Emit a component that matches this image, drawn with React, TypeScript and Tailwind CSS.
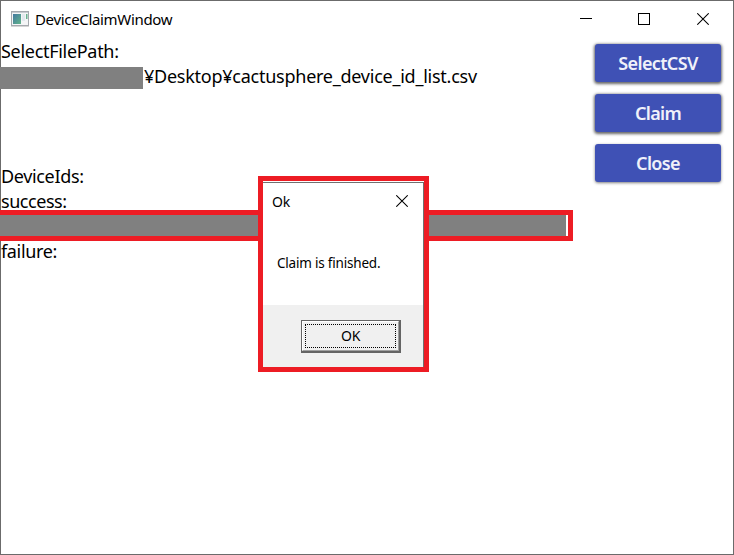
import React from "react";

const ACTIONS = [
  { label: "SelectCSV", style: "tracking-[-0.65px] shadow-[0_1px_3px_1px_rgba(0,0,0,0.6)]" },
  { label: "Claim", style: "tracking-[-0.65px] shadow-[0_1px_3px_1px_rgba(0,0,0,0.6)]" },
  { label: "Close", style: "tracking-[-0.65px] shadow-[0_1px_3px_0px_rgba(0,0,0,0.5)]" },
];

function AppIcon() {
  return (
    <svg width="20" height="16" viewBox="0 0 20 16" className="shrink-0">
      <defs>
        <linearGradient id="pane" x1="0" y1="0" x2="1" y2="1">
          <stop offset="0" stopColor="#4378a0" />
          <stop offset="1" stopColor="#62b58a" />
        </linearGradient>
      </defs>
      <rect x="1.5" y="0.5" width="17" height="14" fill="#f4f5f6" stroke="#a5a9ae" />
      <path d="M2 1.5h16" stroke="#c8ccd2" />
      <rect x="3" y="3" width="8" height="10" fill="url(#pane)" />
      <rect x="12" y="3" width="3" height="7" fill="#e2e9ee" />
      <rect x="16" y="3" width="1.5" height="5" fill="#69b18f" />
      <path d="M1 15.5h18" stroke="#d5d5d5" />
    </svg>
  );
}

function CloseGlyph({ size }: { size: number }) {
  return (
    <svg width={size} height={size} viewBox="0 0 12 12" fill="none" stroke="#000" strokeWidth="1.05">
      <path d="M0.3 0.3L11.7 11.7M11.7 0.3L0.3 11.7" />
    </svg>
  );
}

function TitleBar() {
  return (
    <header className="flex h-[38px] items-center justify-between pb-[2px] pl-[9px] pr-6">
      <div className="flex items-center gap-[5px]">
        <AppIcon />
        <span className="text-[15px] leading-5 tracking-[-0.33px]">DeviceClaimWindow</span>
      </div>
      <div className="flex items-center">
        <svg className="mr-[46px]" width="12" height="12" viewBox="0 0 12 12"><path d="M0 5.5h12" stroke="#000" /></svg>
        <svg className="mr-[47px]" width="12" height="12" viewBox="0 0 12 12"><rect x="0.5" y="0.5" width="11" height="11" fill="none" stroke="#000" /></svg>
        <CloseGlyph size={12} />
      </div>
    </header>
  );
}

function MessageDialog() {
  return (
    <div className="absolute left-[258px] top-[176px] h-[196px] w-[171px] border-[5px] border-[#ed1c24] bg-white pt-px">
      <div className="flex h-full flex-col border-r border-t border-[#707070]">
        <div className="flex h-9 items-center justify-between pl-[9px] pr-[15px]">
          <span className="mt-px text-[14px] leading-5 tracking-[-0.3px]">Ok</span>
          <CloseGlyph size={12} />
        </div>
        <div className="flex grow items-center pl-[14px] pt-[2px]">
          <span className="text-[13.5px] leading-5 tracking-[-0.2px]">Claim is finished.</span>
        </div>
        <div className="flex h-[62px] justify-end bg-[#f0f0f0] pr-[22px] pt-[15px]">
          <button className="h-[33px] w-[100px] border border-[#646464] bg-[#f0f0f0]">
            <div className="h-full border-b border-r border-[#646464]">
              <div className="h-full border-b border-l border-r border-t border-b-[#a0a0a0] border-l-white border-r-[#a0a0a0] border-t-white p-[2px]">
                <div className="flex h-full items-center justify-center border border-dotted border-black text-[14px] leading-5 tracking-[-0.3px]">OK</div>
              </div>
            </div>
          </button>
        </div>
      </div>
    </div>
  );
}

export default function App() {
  return (
    <div className="relative h-[555px] w-[734px] overflow-hidden bg-white font-['Noto_Sans','Open_Sans',sans-serif] text-black">
      <div className="h-full border border-[#6b6b6b]">
        <TitleBar />
        <div className="flex justify-between">
          <main className="-ml-px w-[573px] text-[18px] leading-[25px] tracking-[-0.35px]">
            <div className="pl-px tracking-[-0.3px]">SelectFilePath:</div>
            <div className="flex h-[25px] items-center">
              <div className="mt-[3px] h-[22px] w-[143px] bg-[#808080]" />
              <span className="whitespace-nowrap pl-px tracking-[-0.25px]">¥Desktop¥cactusphere_device_id_list.csv</span>
            </div>
            <div className="mt-[75px] pl-px">DeviceIds:</div>
            <div className="pl-px tracking-[-0.45px]">success:</div>
            <div className="-mb-[2px] -mt-1 h-[31px] border-y-[5px] border-r-[5px] border-[#ed1c24] pr-[2px]">
              <div className="h-full bg-[#808080]" />
            </div>
            <div className="pl-px">failure:</div>
          </main>
          <aside className="flex flex-col gap-3 pr-3 pt-[5px]">
            {ACTIONS.map((a) => (
              <button
                key={a.label}
                className={`h-[38px] w-[126px] rounded-[3px] bg-[#3f51b5] text-[18px] font-semibold leading-[38px] text-[#f0f1fa] ${a.style}`}
              >
                {a.label}
              </button>
            ))}
          </aside>
        </div>
      </div>
      <MessageDialog />
    </div>
  );
}
